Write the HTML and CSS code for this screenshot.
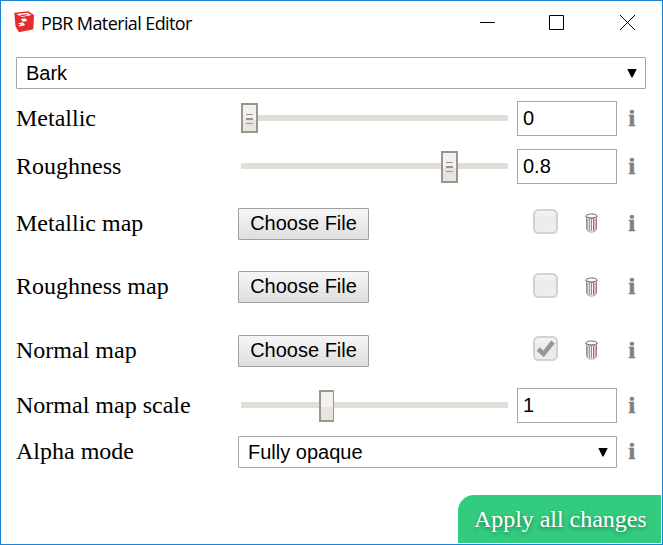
FILE: index.html
```html
<!DOCTYPE html>
<html lang="en">
<head>
<meta charset="utf-8">
<title>PBR Material Editor</title>
<link rel="stylesheet" href="styles.css">
</head>
<body>
<svg width="0" height="0" class="defs">
  <defs>
    <linearGradient id="box" x1="0" y1="0" x2="0" y2="1">
      <stop offset="0" stop-color="#f4f4f4"/><stop offset=".4" stop-color="#ebebeb"/><stop offset="1" stop-color="#eee"/>
    </linearGradient>
    <g id="check">
      <rect x="1" y="1" width="23" height="23" rx="4.5" fill="url(#box)" stroke="#d2d2d2" stroke-width="2"/>
    </g>
    <g id="bin" fill="none">
      <path d="M1.500 5V16.500" stroke="#b88474"/><path d="M2.500 6V17.500" stroke="#a4a4f4"/>
      <path d="M3.500 6V18" stroke="#b4ecfc"/><path d="M4.500 6V18" stroke="#7c9cec"/>
      <path d="M5.500 6V18" stroke="#f4e4dc"/><path d="M6.500 6V18" stroke="#8486e4"/>
      <path d="M8.500 6V18" stroke="#8460c4"/>
      <path d="M9.500 6V18" stroke="#fcc4ac"/><path d="M10.500 6V17.500" stroke="#8cc4fc"/><path d="M11.500 5V16.500" stroke="#a078a0"/>
      <path d="M2 17C3 19.800 10 19.800 11 17" stroke="#a4a4a4"/>
      <ellipse cx="6.500" cy="3" rx="5.500" ry="2" fill="#fff" stroke="#666"/>
      <path d="M.5 3.500C2 5.800 11 5.800 12.500 3.500" stroke="#777"/>
    </g>
  </defs>
</svg>
<div class="window">
  <header class="titlebar">
    <svg class="logo" width="21" height="22" viewBox="0 0 21 22">
      <path d="M.3 1.700 14.300.3 20 4 19.300 18.300 5 21.300 1.500 15.500Z" fill="#e62b2d"/>
      <path d="M2.300 3 13 1.800 17.500 4 8 6Z" fill="#fff"/>
      <path d="M5.500 4 12.500 3.200 14 4 8 5.200Z" fill="#e62b2d"/>
      <path d="M7 8 11 7.300 13 9 12 10.200 8.500 10.700Z" fill="#fff"/>
      <path d="M4 12.200 8.500 11.300 11 13.300 10 14.600 5 15.500 4.700 14.200 7 13.800Z" fill="#fff"/>
    </svg>
    <h1>PBR Material Editor</h1>
    <svg class="controls" width="156" height="16" viewBox="0 0 156 16" fill="none" stroke="#000">
      <path d="M0 7.500H15"/><path d="M69.500.5H83.500V14.500H69.500Z"/><path d="M140 0 155 15M155 0 140 15"/>
    </svg>
  </header>
  <main>
    <div class="select material"><span>Bark</span><i class="arrow"></i></div>
    <div class="row metallic">
      <label>Metallic</label>
      <svg class="slider" width="267" height="35">
        <path d="M0 14H267V20H0Z" fill="#e1ded7"/>
        <path d="M1 3H16V31H1Z" fill="#f3f1ee"/><path d="M2 19H15V30H2Z" fill="#e9e4e0"/>
        <path d="M1 3H16V31H1Z" fill="none" stroke="#9b958c" stroke-width="2"/>
        <path d="M5 13.500H12M5 22.500H12" stroke="#9b958c"/><path d="M5 18H12" stroke="#9b958c" stroke-width="2"/>
      </svg>
      <div class="number">0</div><span class="info">i</span>
    </div>
    <div class="row roughness">
      <label>Roughness</label>
      <svg class="slider" width="267" height="35">
        <path d="M0 14H267V20H0Z" fill="#e1ded7"/>
        <path d="M201 3H216V33H201Z" fill="#f3f1ee"/><path d="M202 19H215V32H202Z" fill="#e9e4e0"/>
        <path d="M201 3H216V33H201Z" fill="none" stroke="#9b958c" stroke-width="2"/>
        <path d="M205 13.500H212M205 22.500H212" stroke="#9b958c"/><path d="M205 18H212" stroke="#9b958c" stroke-width="2"/>
      </svg>
      <div class="number">0.8</div><span class="info">i</span>
    </div>
    <div class="row map metallic-map">
      <label>Metallic map</label><div class="file">Choose File</div>
      <svg class="check" width="25" height="25"><use href="#check"/></svg>
      <svg class="bin" width="14" height="20"><use href="#bin"/></svg>
      <span class="info">i</span>
    </div>
    <div class="row map roughness-map">
      <label>Roughness map</label><div class="file">Choose File</div>
      <svg class="check" width="25" height="25"><use href="#check"/></svg>
      <svg class="bin" width="14" height="20"><use href="#bin"/></svg>
      <span class="info">i</span>
    </div>
    <div class="row map normal-map">
      <label>Normal map</label><div class="file">Choose File</div>
      <svg class="check" width="25" height="25"><use href="#check"/><path d="M5.200 13 10.500 18 20 6" fill="none" stroke="#979797" stroke-width="4.500"/></svg>
      <svg class="bin" width="14" height="20"><use href="#bin"/></svg>
      <span class="info">i</span>
    </div>
    <div class="row scale">
      <label>Normal map scale</label>
      <svg class="slider" width="267" height="35">
        <path d="M0 14H267V20H0Z" fill="#e1ded7"/>
        <path d="M78 2H93V34H78Z" fill="#9b958c"/><path d="M80 4H92V19H80Z" fill="#f3f1ee"/><path d="M80 19H92V32H80Z" fill="#e9e4e0"/>
      </svg>
      <div class="number">1</div><span class="info">i</span>
    </div>
    <div class="row alpha">
      <label>Alpha mode</label>
      <div class="select"><span>Fully opaque</span><i class="arrow"></i></div>
      <span class="info">i</span>
    </div>
  </main>
  <footer><div class="apply">Apply all changes</div></footer>
</div>
</body>
</html>
```

FILE: styles.css
```css
* { box-sizing: border-box; }
body { margin: 0; background: #fff; color: #000; }
.defs { display: block; }
.window {
  width: 663px; height: 545px; border: 1px solid #1883d7;
  display: flex; flex-direction: column; overflow: hidden;
  font: 24px/28px "Liberation Serif", serif; background: #fff;
}
.titlebar { height: 56px; padding: 10px 26px 0 13px; display: flex; align-items: flex-start; }
.logo { margin-right: 6px; }
h1 { margin: 0; font: 18px/24px "Open Sans", "Noto Sans", sans-serif; letter-spacing: -0.6px; }
.controls { margin: 4px 0 0 auto; }
main { padding: 0 16px 0 15px; }
.select {
  height: 32px; border: 1px solid #a6a6a6; border-radius: 1px; padding: 0 9px;
  display: flex; align-items: center; justify-content: space-between;
  font: 20px/30px "Liberation Sans", sans-serif;
}
.material { margin-bottom: 6px; }
.arrow { width: 10px; height: 9px; margin-right: -1px; background: #000; clip-path: polygon(0 0, 100% 0, 55% 100%, 45% 100%); }
.row { display: grid; grid-template-columns: 222px 279px 100px 29px; align-items: center; }
.row.map { grid-template-columns: 222px 295px 52px 32px 29px; }
.row.alpha { grid-template-columns: 222px 379px 29px; }
label, .info { padding-bottom: 2px; }
.metallic { height: 47px; }
.roughness { height: 49px; }
.metallic-map { height: 66px; }
.roughness-map { height: 60px; }
.normal-map { height: 68px; }
.scale { height: 41px; }
.alpha { height: 52px; }
.slider { margin-left: 3px; display: block; }
.number {
  height: 35px; border: 1px solid #a6a6a6; padding: 0 5px;
  font: 20px/33px "Liberation Sans", sans-serif;
}
.file {
  width: 131px; height: 32px; border: 1px solid #a0a0a0; border-radius: 1px;
  background: linear-gradient(#f6f6f6, #dedede);
  font: 20px/28px "Liberation Sans", sans-serif; text-align: center;
}
.check { display: block; margin-bottom: 5px; }
.roughness-map .check { margin-bottom: 3px; }
.bin { display: block; margin-bottom: 2px; }
.roughness-map .bin { margin-bottom: 0; }
.info { color: #808080; font-weight: bold; padding-left: 11.5px; -webkit-text-stroke: 0.7px #808080; }
footer { margin-top: auto; display: flex; justify-content: flex-end; padding: 0 1px 1px 0; }
.apply {
  width: 203px; height: 48px; border-radius: 16px 0 0; background: #33cc7f; color: #fff;
  line-height: 48px; padding-left: 16px; letter-spacing: -0.04px;
  text-shadow: 0 2px 4px rgba(0, 0, 0, .4); white-space: nowrap;
}
```
